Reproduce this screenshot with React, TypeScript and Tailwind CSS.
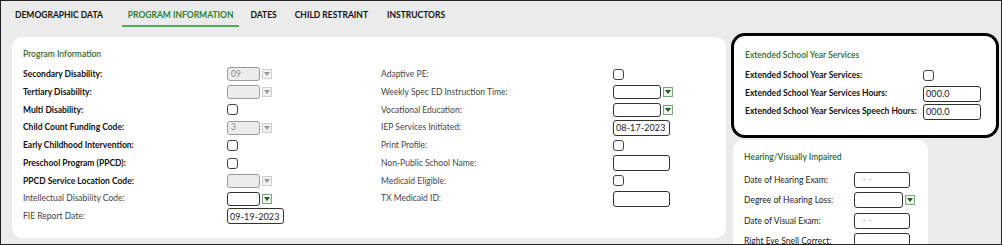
import React from "react";

type Field =
  | { kind: "check" }
  | { kind: "select"; value?: string; disabled?: boolean; width?: string }
  | { kind: "input"; value?: string; width?: string };

type Row = { label: string; bold?: boolean; field: Field };

const leftRows: Array<Row> = [
  { label: "Secondary Disability:", bold: true, field: { kind: "select", value: "09", disabled: true } },
  { label: "Tertiary Disability:", bold: true, field: { kind: "select", disabled: true } },
  { label: "Multi Disability:", bold: true, field: { kind: "check" } },
  { label: "Child Count Funding Code:", bold: true, field: { kind: "select", value: "3", disabled: true } },
  { label: "Early Childhood Intervention:", bold: true, field: { kind: "check" } },
  { label: "Preschool Program (PPCD):", bold: true, field: { kind: "check" } },
  { label: "PPCD Service Location Code:", bold: true, field: { kind: "select", disabled: true } },
  { label: "Intellectual Disability Code:", field: { kind: "select", width: "w-[33px]" } },
  { label: "FIE Report Date:", field: { kind: "input", value: "09-19-2023" } }
];

const rightRows: Array<Row> = [
  { label: "Adaptive PE:", field: { kind: "check" } },
  { label: "Weekly Spec ED Instruction Time:", field: { kind: "select" } },
  { label: "Vocational Education:", field: { kind: "select" } },
  { label: "IEP Services Initiated:", field: { kind: "input", value: "08-17-2023" } },
  { label: "Print Profile:", field: { kind: "check" } },
  { label: "Non-Public School Name:", field: { kind: "input" } },
  { label: "Medicaid Eligible:", field: { kind: "check" } },
  { label: "TX Medicaid ID:", field: { kind: "input" } }
];

const tabs = [
  { label: "DEMOGRAPHIC DATA", cls: "mr-[19px] text-[#111]" },
  { label: "PROGRAM INFORMATION", cls: "mr-[11px] border-b-2 border-[#4caf50] px-[6px] text-[#2f7d32]" },
  { label: "DATES", cls: "mr-[18px] text-[#111]" },
  { label: "CHILD RESTRAINT", cls: "mr-[19px] text-[#111]" },
  { label: "INSTRUCTORS", cls: "text-[#111]" }
];

const Arrow = ({ disabled }: { disabled?: boolean }) => (
  <span
    className={`ml-[2px] flex h-[10px] w-[10px] items-center justify-center border ${
      disabled ? "border-[#cfcfcf] bg-[#f2f2f2]" : "border-[#7aa67a] bg-[#eef5ee]"
    }`}
  >
    <svg width="6" height="4" viewBox="0 0 6 4">
      <path d="M0 0 L6 0 L3 4 Z" fill={disabled ? "#9a9a9a" : "#1f5f1f"} />
    </svg>
  </span>
);

const Control = ({ field }: { field: Field }) => {
  if (field.kind === "check") {
    return <span className="block h-[11px] w-[11px] rounded-[3px] border border-[#444] bg-white" />;
  }
  if (field.kind === "select") {
    return (
      <span className="flex items-center">
        <span
          className={`flex h-[14px] items-center rounded-[3px] border px-[3px] text-[8.5px] font-normal ${
            field.disabled
              ? "w-[33px] border-[#9a9a9a] bg-[#ececec] text-[#888]"
              : `${field.width ?? "w-[48px]"} border-[#333] bg-white`
          }`}
        >
          {field.value}
        </span>
        <Arrow disabled={field.disabled} />
      </span>
    );
  }
  return (
    <span
      className={`flex h-[16px] items-center whitespace-nowrap rounded-[3px] border border-[#333] bg-white px-[2px] text-[9px] font-normal tracking-[0.1px] text-[#222] ${
        field.width ?? "w-[57px]"
      }`}
    >
      {field.value}
    </span>
  );
};

const FormRow = ({ row, labelWidth, height }: { row: Row; labelWidth: string; height: string }) => (
  <div className={`flex items-center ${height}`}>
    <span className={`${labelWidth} whitespace-nowrap ${row.bold ? "font-bold text-[#111]" : "text-[#444]"}`}>
      {row.label}
    </span>
    <Control field={row.field} />
  </div>
);

const hearingRows: Array<{ label: string; field: Field }> = [
  { label: "Date of Hearing Exam:", field: { kind: "input", value: " -  -" } },
  { label: "Degree of Hearing Loss:", field: { kind: "select" } },
  { label: "Date of Visual Exam:", field: { kind: "input", value: " -  -" } },
  { label: "Right Eye Snell Correct:", field: { kind: "input" } }
];

export default function App() {
  return (
    <div
      className="h-[245px] w-[1002px] overflow-hidden border border-[#222] bg-[#ebebeb] text-[8.5px] leading-none"
      style={{ fontFamily: "Lato, 'Open Sans', sans-serif" }}
    >
      <nav className="flex h-[32px] items-start pl-[14px] pt-[10px] text-[8.5px] font-bold">
        {tabs.map((tab) => (
          <span key={tab.label} className={`pb-[5px] ${tab.cls}`}>
            {tab.label}
          </span>
        ))}
      </nav>

      <div className="flex items-start">
        <section className="ml-[11px] mt-[4px] h-[201px] w-[714px] rounded-[10px] bg-white pl-[11px] pt-[13px]">
          <h2 className="mb-[7px] text-[8.5px] font-semibold text-[#2d6a2d]">Program Information</h2>
          <div className="flex">
            <div className="w-[358px]">
              {leftRows.map((row) => (
                <FormRow key={row.label} row={row} labelWidth="w-[204px]" height="h-[17.75px]" />
              ))}
            </div>
            <div>
              {rightRows.map((row) => (
                <FormRow key={row.label} row={row} labelWidth="w-[232px]" height="h-[17.75px]" />
              ))}
            </div>
          </div>
        </section>

        <div className="ml-[5px] flex flex-col">
          <section className="h-[105px] w-[268px] rounded-[14px] border-[3px] border-black bg-white pl-[11px] pt-[15px]">
            <h2 className="mb-[7px] text-[8.5px] font-semibold text-[#2d6a2d]">Extended School Year Services</h2>
            <FormRow
              row={{ label: "Extended School Year Services:", bold: true, field: { kind: "check" } }}
              labelWidth="w-[178px]"
              height="h-[18px]"
            />
            <FormRow
              row={{
                label: "Extended School Year Services Hours:",
                bold: true,
                field: { kind: "input", value: "000.0", width: "w-[58px]" }
              }}
              labelWidth="w-[178px]"
              height="h-[18px]"
            />
            <FormRow
              row={{
                label: "Extended School Year Services Speech Hours:",
                bold: true,
                field: { kind: "input", value: "000.0", width: "w-[58px]" }
              }}
              labelWidth="w-[178px]"
              height="h-[18px]"
            />
          </section>

          <section className="ml-[2px] mt-[2px] h-[120px] w-[195px] rounded-[10px] bg-white pl-[11px] pt-[13px]">
            <h2 className="mb-[8px] text-[8.5px] font-semibold text-[#2d6a2d]">Hearing/Visually Impaired</h2>
            {hearingRows.map((row) => (
              <div key={row.label} className="flex h-[20.5px] items-center">
                <span className="w-[110px] whitespace-nowrap text-[#222]">{row.label}</span>
                {row.field.kind === "input" ? (
                  <span className="flex h-[16px] w-[56px] items-center whitespace-pre rounded-[3px] border border-[#333] bg-white px-[6px] text-[7px] text-[#888]">
                    {row.field.value}
                  </span>
                ) : (
                  <span className="flex items-center">
                    <span className="h-[16px] w-[49px] rounded-[3px] border border-[#333] bg-white" />
                    <Arrow />
                  </span>
                )}
              </div>
            ))}
          </section>
        </div>
      </div>
    </div>
  );
}
